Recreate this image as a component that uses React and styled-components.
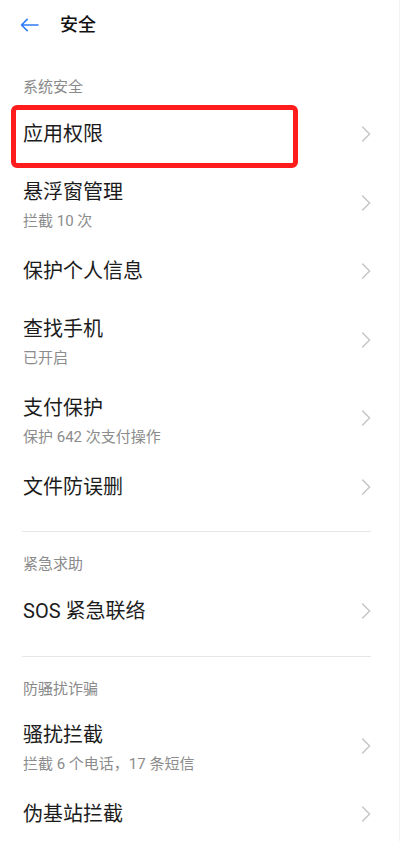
import React from "react";
import styled, { createGlobalStyle } from "styled-components";

const GlobalStyle = createGlobalStyle`
  html, body {
    margin: 0;
    padding: 0;
    background: #ffffff;
  }
  body {
    font-family: "Roboto", "Noto Sans CJK SC", "Noto Sans", sans-serif;
    -webkit-font-smoothing: antialiased;
  }
  * { box-sizing: border-box; }
`;

const Page = styled.div`
  width: 400px;
  min-height: 841px;
  background: #ffffff;
  border-right: 1px solid #f3f3f3;
  overflow: hidden;
`;

const TopBar = styled.header`
  height: 50px;
  margin-bottom: 5px;
  display: flex;
  align-items: center;
  padding-left: 20px;
`;

const BackButton = styled.button`
  border: 0;
  background: none;
  padding: 0;
  width: 19px;
  height: 14px;
  display: flex;
  align-items: center;
  margin-right: 21px;
  cursor: pointer;
`;

const Title = styled.h1`
  margin: 0;
  font-size: 18px;
  line-height: 24px;
  font-weight: 500;
  color: #111111;
`;

const SectionHeader = styled.div`
  height: 50px;
  padding: 25px 23px 11px 23px;
  font-size: 15px;
  line-height: 14px;
  color: #8a8a8a;
`;

const Row = styled.div`
  position: relative;
  height: ${(p) => (p.$double ? "78.5px" : "58.5px")};
  display: flex;
  align-items: center;
  padding: 0 28px 0 23px;
`;

const TextBlock = styled.div`
  display: flex;
  flex-direction: column;
  margin-top: ${(p) => (p.$double ? "5px" : "0")};
`;

const RowTitle = styled.div`
  font-size: 20px;
  line-height: 26px;
  color: #1c1c1c;
`;

const RowSub = styled.div`
  margin-top: 6px;
  font-size: 15px;
  line-height: 20px;
  color: #8c8c8c;
`;

const Chevron = styled.svg`
  margin-left: auto;
  flex: none;
`;

const Divider = styled.hr`
  margin: 15px 28px 0 22px;
  border: 0;
  height: 1px;
  background: #e6e6e6;
`;

const Highlight = styled.div`
  position: absolute;
  left: 11px;
  top: 0;
  width: 287px;
  height: 63px;
  border: 5px solid #ff1c1c;
  border-radius: 6px;
  pointer-events: none;
`;

const ArrowIcon = () => (
  <svg width="19" height="14" viewBox="0 0 19 14" fill="none">
    <path
      d="M1.5 7 H18 M1.5 7 L7.2 1.4 M1.5 7 L7.2 12.6"
      stroke="#2f7cf6"
      strokeWidth="1.6"
      strokeLinecap="round"
      strokeLinejoin="round"
    />
  </svg>
);

const ChevronIcon = () => (
  <Chevron width="10" height="16" viewBox="0 0 10 16" fill="none">
    <path
      d="M1.6 1 L8.6 8 L1.6 15"
      stroke="#c6c6c6"
      strokeWidth="1.5"
      strokeLinecap="round"
      strokeLinejoin="round"
    />
  </Chevron>
);

const ListItem = ({ title, sub, highlight }) => (
  <Row $double={!!sub}>
    {highlight && <Highlight />}
    <TextBlock $double={!!sub}>
      <RowTitle>{title}</RowTitle>
      {sub && <RowSub>{sub}</RowSub>}
    </TextBlock>
    <ChevronIcon />
  </Row>
);

const sections = [
  {
    header: "系统安全",
    items: [
      { title: "应用权限", highlight: true },
      { title: "悬浮窗管理", sub: "拦截 10 次" },
      { title: "保护个人信息" },
      { title: "查找手机", sub: "已开启" },
      { title: "支付保护", sub: "保护 642 次支付操作" },
      { title: "文件防误删" },
    ],
  },
  {
    header: "紧急求助",
    items: [{ title: "SOS 紧急联络" }],
  },
  {
    header: "防骚扰诈骗",
    items: [
      { title: "骚扰拦截", sub: "拦截 6 个电话，17 条短信" },
      { title: "伪基站拦截" },
    ],
  },
];

export default function App() {
  return (
    <>
      <GlobalStyle />
      <Page>
        <TopBar>
          <BackButton aria-label="返回">
            <ArrowIcon />
          </BackButton>
          <Title>安全</Title>
        </TopBar>
        {sections.map((section, i) => (
          <section key={section.header}>
            {i > 0 && <Divider />}
            <SectionHeader>{section.header}</SectionHeader>
            {section.items.map((item) => (
              <ListItem key={item.title} {...item} />
            ))}
          </section>
        ))}
      </Page>
    </>
  );
}
